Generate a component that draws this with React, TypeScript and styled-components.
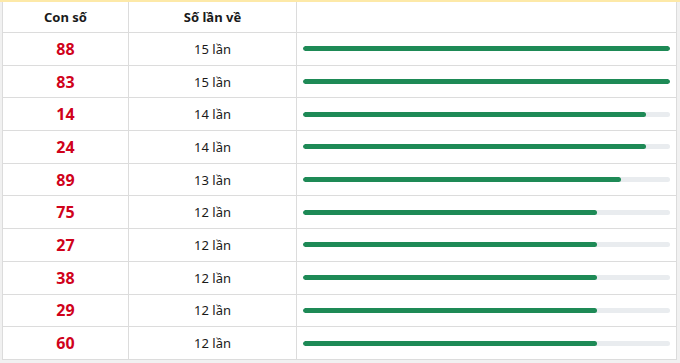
import React from "react";
import styled, { createGlobalStyle } from "styled-components";

const rows = [
  { num: "88", count: 15 },
  { num: "83", count: 15 },
  { num: "14", count: 14 },
  { num: "24", count: 14 },
  { num: "89", count: 13 },
  { num: "75", count: 12 },
  { num: "27", count: 12 },
  { num: "38", count: 12 },
  { num: "29", count: 12 },
  { num: "60", count: 12 },
];

const max = 15;

const App: React.FC = () => {
  return (
    <>
      <GlobalStyle />
      <Page>
        <Table>
          <thead>
            <tr>
              <HeadCell $w={125}>Con số</HeadCell>
              <HeadCell $w={167}>Số lần về</HeadCell>
              <HeadCell />
            </tr>
          </thead>
          <tbody>
            {rows.map((r) => (
              <Row key={r.num}>
                <NumCell>{r.num}</NumCell>
                <CountCell>{r.count} lần</CountCell>
                <BarCell>
                  <Track>
                    <Fill style={{ width: `${(r.count / max) * 100}%` }} />
                  </Track>
                </BarCell>
              </Row>
            ))}
          </tbody>
        </Table>
      </Page>
    </>
  );
};

export default App;

const GlobalStyle = createGlobalStyle`
  body {
    margin: 0;
    background: #f1f1f1;
    font-family: "Noto Sans", "Open Sans", sans-serif;
  }
`;

const Page = styled.div`
  width: 680px;
  height: 363px;
  border-top: 2px solid #fde9a8;
  box-sizing: border-box;
  padding-left: 2px;
`;

const Table = styled.table`
  width: 675px;
  border-collapse: collapse;
  background: #fff;
  border: 1px solid #dcdcdc;
  border-top: none;
  table-layout: fixed;
`;

const HeadCell = styled.th<{ $w?: number }>`
  width: ${(p) => (p.$w ? `${p.$w}px` : "auto")};
  height: 30px;
  padding: 0;
  font-size: 13px;
  font-weight: 700;
  color: #1a1a1a;
  text-align: center;
  border-right: 1px solid #dcdcdc;
  border-bottom: 1px solid #dcdcdc;
`;

const Row = styled.tr`
  height: 32.7px;
  & td {
    border-right: 1px solid #dcdcdc;
    border-bottom: 1px solid #dcdcdc;
    padding: 0;
  }
`;

const NumCell = styled.td`
  text-align: center;
  font-size: 16px;
  font-weight: 700;
  color: #d0021b;
`;

const CountCell = styled.td`
  text-align: center;
  font-size: 13px;
  color: #1a1a1a;
`;

const BarCell = styled.td`
  padding: 0 6px 0 6px !important;
`;

const Track = styled.div`
  height: 5px;
  border-radius: 3px;
  background: #e9ecef;
  overflow: hidden;
`;

const Fill = styled.div`
  height: 100%;
  border-radius: 3px;
  background: #1e8a56;
`;
